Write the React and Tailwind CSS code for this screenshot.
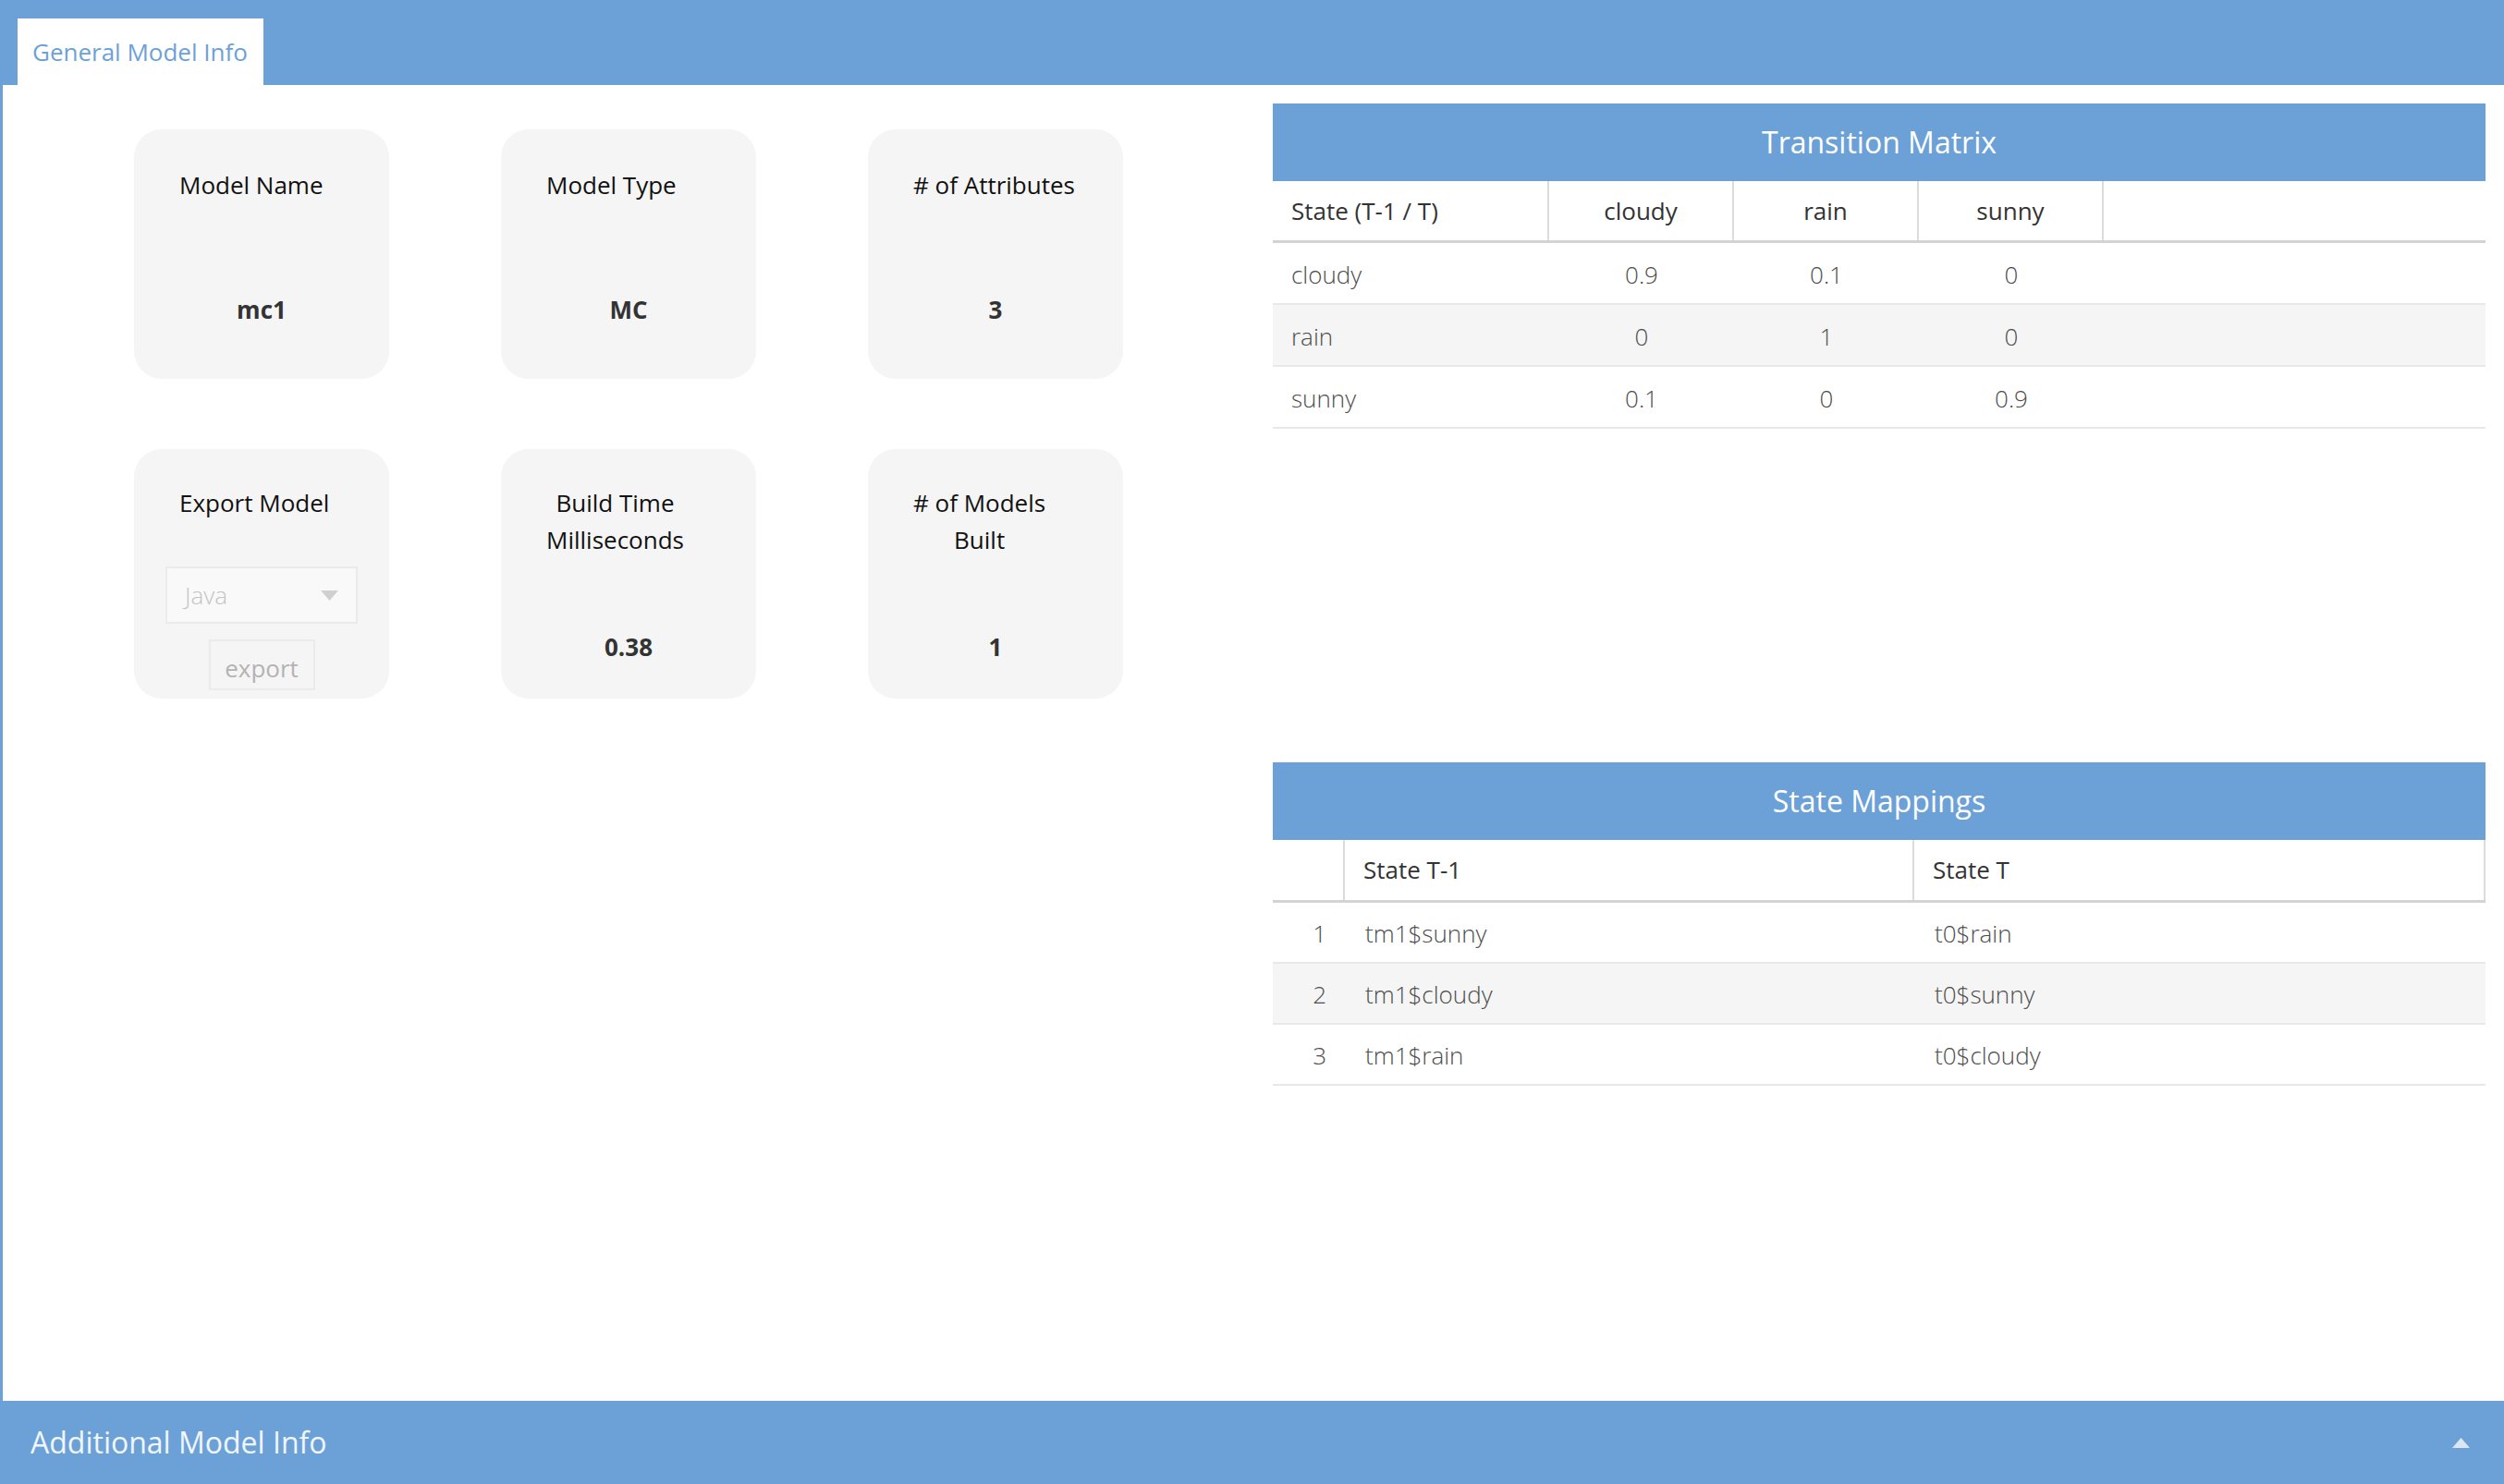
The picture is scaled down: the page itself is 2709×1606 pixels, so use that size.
import React from "react";

const BLUE = "bg-[#6ca1d7]";

function Card({ title, value, pt, valueMt }) {
    return (
        <div className={`w-[276px] h-[270px] rounded-[30px] bg-[#f5f5f5] ${pt}`}>
            <div className="pl-[49px]">
                <div className="w-fit text-center text-[26px] leading-[40px] text-[#111]">{title}</div>
            </div>
            <div className={`text-center font-bold text-[26px] leading-[40px] text-[#333] ${valueMt}`}>{value}</div>
        </div>
    );
}

function ExportCard() {
    return (
        <div className="w-[276px] h-[270px] rounded-[30px] bg-[#f5f5f5] pt-[38px]">
            <div className="pl-[49px]">
                <div className="w-fit text-center text-[26px] leading-[40px] text-[#111]">Export Model</div>
            </div>
            <div className="mt-[49px] mx-auto w-[208px] h-[62px] border-2 border-[#ebebeb] bg-[#f9f9f9] flex items-center justify-between pl-[19px] pr-[19px]">
                <span className="text-[26px] font-light text-[#c4c4c4]">Java</span>
                <svg width="19" height="11" viewBox="0 0 19 11">
                    <polygon points="0,0 19,0 9.5,11" fill="#d0d0d0" />
                </svg>
            </div>
            <div className="mt-[17px] mx-auto w-[115px] h-[55px] pt-[8px] border-2 border-[#ebebeb] flex items-center justify-center text-[26px] text-[#b3b3b3]">
                export
            </div>
        </div>
    );
}

const matrix = [
    ["cloudy", "0.9", "0.1", "0"],
    ["rain", "0", "1", "0"],
    ["sunny", "0.1", "0", "0.9"],
];

const mappings = [
    ["1", "tm1$sunny", "t0$rain"],
    ["2", "tm1$cloudy", "t0$sunny"],
    ["3", "tm1$rain", "t0$cloudy"],
];

function TableTitle({ children }) {
    return (
        <div className={`${BLUE} h-[84px] flex items-center justify-center text-white text-[32px]`}>
            {children}
        </div>
    );
}

function TransitionMatrix() {
    return (
        <div>
            <TableTitle>Transition Matrix</TableTitle>
            <div className="flex h-[67px] border-b-[3px] border-[#d3d3d3] text-[26px] text-[#333]">
                <div className="w-[299px] flex items-center pl-[20px] border-r-2 border-[#dcdcdc]">State (T-1 / T)</div>
                <div className="w-[200px] flex items-center justify-center border-r-2 border-[#dcdcdc]">cloudy</div>
                <div className="w-[200px] flex items-center justify-center border-r-2 border-[#dcdcdc]">rain</div>
                <div className="w-[200px] flex items-center justify-center border-r-2 border-[#dcdcdc]">sunny</div>
                <div className="flex-1" />
            </div>
            {matrix.map((row, i) => (
                <div
                    key={row[0]}
                    className={`flex h-[67px] pt-[3px] border-b-2 border-[#e8e8e8] text-[26px] font-light text-[#4d4d4d] ${i === 1 ? "bg-[#f5f5f5]" : "bg-white"}`}
                >
                    <div className="w-[299px] flex items-center pl-[20px]">{row[0]}</div>
                    <div className="w-[200px] flex items-center justify-center">{row[1]}</div>
                    <div className="w-[200px] flex items-center justify-center">{row[2]}</div>
                    <div className="w-[200px] flex items-center justify-center">{row[3]}</div>
                    <div className="flex-1" />
                </div>
            ))}
        </div>
    );
}

function StateMappings() {
    return (
        <div>
            <TableTitle>State Mappings</TableTitle>
            <div className="flex h-[68px] border-b-[3px] border-[#d3d3d3] text-[26px] text-[#333]">
                <div className="w-[78px] border-r-2 border-[#dcdcdc]" />
                <div className="w-[616px] flex items-center pl-[20px] border-r-2 border-[#dcdcdc]">State T-1</div>
                <div className="flex-1 flex items-center pl-[20px] border-r-2 border-[#dcdcdc]">State T</div>
            </div>
            {mappings.map((row, i) => (
                <div
                    key={row[0]}
                    className={`flex h-[66px] pt-[2px] border-b-2 border-[#e8e8e8] text-[26px] font-light text-[#4d4d4d] ${i === 1 ? "bg-[#f5f5f5]" : "bg-white"}`}
                >
                    <div className="w-[78px] flex items-center justify-end pr-[20px]">{row[0]}</div>
                    <div className="w-[616px] flex items-center pl-[22px]">{row[1]}</div>
                    <div className="flex-1 flex items-center pl-[22px]">{row[2]}</div>
                </div>
            ))}
        </div>
    );
}

export default function App() {
    return (
        <div
            className="w-[2709px] h-[1606px] flex flex-col bg-white overflow-hidden"
            style={{ fontFamily: '"Open Sans", "Noto Sans", sans-serif' }}
        >
            {/* tab bar */}
            <div className={`${BLUE} h-[92px] shrink-0 flex items-end pl-[19px]`}>
                <div className="h-[72px] w-[266px] bg-white flex items-center pl-[16px] text-[26px] leading-none text-[#6ca1d7]">
                    General Model Info
                </div>
            </div>

            {/* tab content */}
            <div className="flex-1 flex border-l-[3px] border-[#6ca1d7]">
                <div className="w-[1374px] shrink-0 pt-[48px] pl-[142px]">
                    <div className="flex gap-[121px]">
                        <Card title="Model Name" value="mc1" pt="pt-[40px]" valueMt="mt-[95px]" />
                        <Card title="Model Type" value="MC" pt="pt-[40px]" valueMt="mt-[95px]" />
                        <Card title="# of Attributes" value="3" pt="pt-[40px]" valueMt="mt-[95px]" />
                    </div>
                    <div className="flex gap-[121px] mt-[76px]">
                        <ExportCard />
                        <Card title={<>Build Time<br />Milliseconds</>} value="0.38" pt="pt-[38px]" valueMt="mt-[76px]" />
                        <Card title={<># of Models<br />Built</>} value="1" pt="pt-[38px]" valueMt="mt-[76px]" />
                    </div>
                </div>
                <div className="flex-1 pt-[20px] pr-[20px]">
                    <TransitionMatrix />
                    <div className="mt-[361px]">
                        <StateMappings />
                    </div>
                </div>
            </div>

            {/* footer */}
            <div className={`${BLUE} h-[90px] shrink-0 flex items-center justify-between pl-[33px] pr-[37px]`}>
                <span className="text-[32px] text-white/90">Additional Model Info</span>
                <svg width="19" height="11" viewBox="0 0 19 11">
                    <polygon points="9.5,0 19,11 0,11" fill="#dbe6f2" />
                </svg>
            </div>
        </div>
    );
}
